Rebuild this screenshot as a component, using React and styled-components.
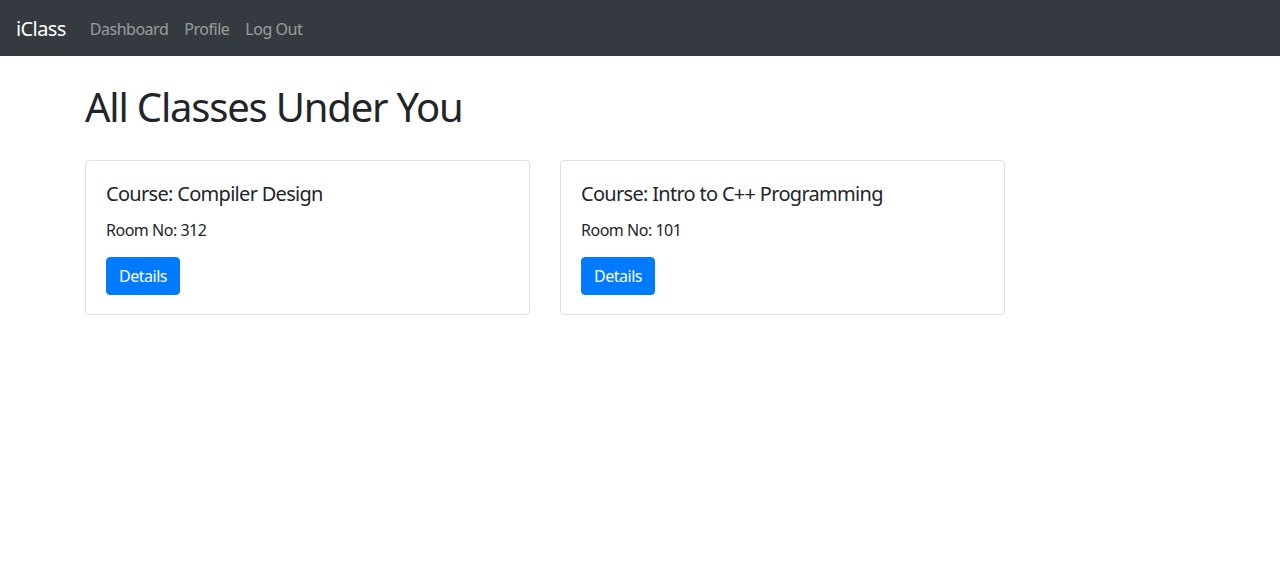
import React from "react";
import styled, { createGlobalStyle } from "styled-components";

const Global = createGlobalStyle`
  *, *::before, *::after { box-sizing: border-box; }
  body {
    margin: 0;
    font-family: "Noto Sans", "Open Sans", sans-serif;
    font-size: 16px;
    line-height: 1.5;
    letter-spacing: -0.03em;
    color: #212529;
    background: #fff;
  }
`;

const Navbar = styled.nav`
  display: flex;
  align-items: center;
  height: 56px;
  padding: 8px 16px;
  background: #343a40;
`;

const Brand = styled.a`
  font-size: 20px;
  line-height: 30px;
  letter-spacing: -0.03em;
  color: #fff;
  margin-right: 16px;
  text-decoration: none;
  padding-top: 2px;
`;

const NavList = styled.div`
  display: flex;
  padding-top: 2px;
`;

const NavLink = styled.a`
  padding: 8px;
  color: rgba(255, 255, 255, 0.5);
  text-decoration: none;
`;

const Container = styled.main`
  max-width: 1140px;
  margin: 0 auto;
  padding: 0 15px;
`;

const Heading = styled.h1`
  font-size: 40px;
  font-weight: 400;
  line-height: 1.2;
  letter-spacing: -0.03em;
  margin: 27px 0 8px;
`;

const CardRow = styled.div`
  display: flex;
  gap: 30px;
  margin-top: 29px;
`;

const Card = styled.div`
  width: 445px;
  border: 1px solid rgba(0, 0, 0, 0.125);
  border-radius: 4px;
  padding: 20px 20px 19px;
`;

const CardTitle = styled.h5`
  font-size: 20px;
  font-weight: 400;
  line-height: 1.2;
  letter-spacing: -0.035em;
  margin: 1px 0 12px;
`;

const CardText = styled.p`
  margin: 0 0 15px;
`;

const Button = styled.button`
  font-family: inherit;
  font-size: 16px;
  line-height: 1.5;
  letter-spacing: -0.03em;
  color: #fff;
  background: #007bff;
  border: 1px solid #007bff;
  border-radius: 4px;
  padding: 6px 12px;
  cursor: pointer;
`;

const classes = [
  { course: "Compiler Design", room: "312" },
  { course: "Intro to C++ Programming", room: "101" },
];

export default function App() {
  return (
    <>
      <Global />
      <Navbar>
        <Brand href="#">iClass</Brand>
        <NavList>
          <NavLink href="#">Dashboard</NavLink>
          <NavLink href="#">Profile</NavLink>
          <NavLink href="#">Log Out</NavLink>
        </NavList>
      </Navbar>
      <Container>
        <Heading>All Classes Under You</Heading>
        <CardRow>
          {classes.map((c) => (
            <Card key={c.course}>
              <CardTitle>Course: {c.course}</CardTitle>
              <CardText>Room No: {c.room}</CardText>
              <Button>Details</Button>
            </Card>
          ))}
        </CardRow>
      </Container>
    </>
  );
}
